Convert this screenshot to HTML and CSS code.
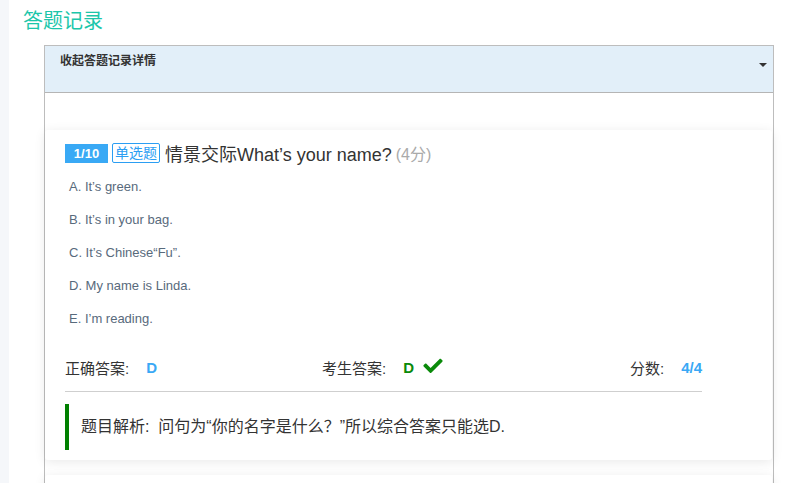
FILE: index.html
```html
<!DOCTYPE html>
<html>
<head>
<meta charset="utf-8">
<link rel="stylesheet" href="styles.css">
</head>
<body>
<div class="page">
  <div class="strip"></div>
  <div class="main">
    <h2 class="title">答题记录</h2>
    <div class="panel">
      <div class="panel-head">
        <span class="head-text">收起答题记录详情</span>
        <span class="caret"></span>
      </div>
      <div class="panel-body">
        <div class="card">
          <div class="q-line">
            <span class="num">1/10</span>
            <span class="type">单选题</span>
            <span class="q-text">情景交际What’s your name?</span>
            <span class="score">(4分)</span>
          </div>
          <ul class="options">
            <li>A. It’s green.</li>
            <li>B. It’s in your bag.</li>
            <li>C. It’s Chinese“Fu”.</li>
            <li>D. My name is Linda.</li>
            <li>E. I’m reading.</li>
          </ul>
          <div class="answers">
            <div class="ans first">正确答案:<b class="blue">D</b></div>
            <div class="ans mid">考生答案:<b class="green">D</b><svg class="check" viewBox="0 0 512 400" width="20" height="15"><path fill="#0a8a0a" d="M173.9 391.4l-166.4-166.4c-10-10-10-26.2 0-36.2l36.2-36.2c10-10 26.2-10 36.2 0L192 264.7 432.1 24.6c10-10 26.2-10 36.2 0l36.2 36.2c10 10 10 26.2 0 36.2l-294.4 294.4c-10 10-26.2 10-36.2 0z"/></svg></div>
            <div class="ans">分数:<b class="blue">4/4</b></div>
          </div>
          <div class="analysis">题目解析:&nbsp; 问句为“你的名字是什么？”所以综合答案只能选D.</div>
        </div>
        <div class="card next"></div>
      </div>
    </div>
  </div>
</div>
</body>
</html>
```

FILE: styles.css
```css
html, body {
  margin: 0;
  padding: 0;
  background: #fff;
  font-family: "Liberation Sans", "Noto Sans CJK SC", sans-serif;
  color: #333;
  overflow: hidden;
}
.page {
  display: flex;
  height: 483px;
}
.strip {
  width: 9px;
  flex: none;
  background: #f5f7fa;
}
.main {
  flex: 1;
  padding-left: 14px;
}
.title {
  margin: 0;
  padding-top: 8px;
  height: 45px;
  box-sizing: border-box;
  font-size: 20px;
  font-weight: normal;
  color: #1cc6aa;
  line-height: 26px;
}
.panel {
  margin-left: 21px;
  width: 730px;
  border: 1px solid #bdbdbd;
  border-bottom: none;
  box-sizing: border-box;
}
.panel-head {
  height: 47px;
  box-sizing: border-box;
  background: #e2eff9;
  border-bottom: 1px solid #b5b5b5;
  display: flex;
  justify-content: space-between;
  align-items: flex-start;
  padding: 8px 6px 0 15px;
}
.head-text {
  font-size: 12px;
  font-weight: bold;
  color: #333;
  line-height: 14px;
}
.caret {
  margin-top: 9px;
  width: 0;
  height: 0;
  border-left: 4px solid transparent;
  border-right: 4px solid transparent;
  border-top: 4px solid #333;
}
.panel-body {
  padding-top: 37px;
  padding-right: 1px;
}
.card {
  background: #fff;
  box-shadow: 0 2px 12px rgba(0, 0, 0, 0.09);
  border-radius: 3px;
  padding: 13px 20px 9px 20px;
  height: 330px;
  box-sizing: border-box;
}
.card.next {
  margin-top: 15px;
  height: 40px;
}
.q-line {
  display: flex;
  align-items: center;
  height: 20px;
}
.num {
  background: #39a9f5;
  color: #fff;
  font-weight: bold;
  font-size: 13px;
  width: 43px;
  height: 19px;
  line-height: 19px;
  text-align: center;
  margin-right: 4px;
}
.type {
  border: 1px solid #2b9ef3;
  color: #2b9ef3;
  font-size: 14px;
  height: 18px;
  line-height: 18px;
  padding: 0 2px;
  border-radius: 2px;
  margin-right: 5px;
}
.q-text {
  font-size: 18px;
  color: #333;
}
.score {
  font-size: 16px;
  color: #aaa;
  margin-left: 4px;
}
.options {
  list-style: none;
  margin: 7px 0 0 4px;
  padding: 0;
}
.options li {
  font-size: 13px;
  color: #586a7c;
  height: 33px;
  line-height: 33px;
}
.answers {
  width: 637px;
  display: flex;
  align-items: center;
  font-size: 15px;
  margin-top: 14px;
  height: 36px;
  border-bottom: 1px solid #cfcfcf;
  padding-bottom: 6px;
}
.ans {
  display: flex;
  align-items: center;
}
.ans.first {
  width: 257px;
  flex: none;
}
.ans.mid {
  flex: 1;
}
.ans b {
  margin-left: 17px;
  font-size: 15px;
}
.blue { color: #3aa8f5; }
.green { color: #0a8a0a; }
.check {
  margin-left: 9px;
  margin-top: -4px;
}
.analysis {
  margin-top: 12px;
  border-left: 4px solid #008000;
  height: 46px;
  line-height: 46px;
  padding-left: 12px;
  font-size: 16px;
  color: #333;
}
```
